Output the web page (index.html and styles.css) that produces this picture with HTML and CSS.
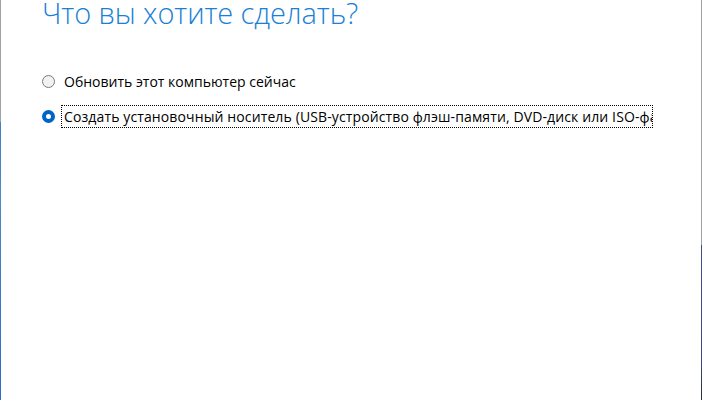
FILE: index.html
```html
<!DOCTYPE html>
<html lang="ru">
<head>
    <meta charset="UTF-8">
    <title>Программа установки Windows 10</title>
    <link rel="stylesheet" href="styles.css">
</head>
<body>
    <div class="frame">
        <div class="edge edge-left"></div>
        <main class="page">
            <h1 class="title">Что вы хотите сделать?</h1>
            <div class="options">
                <label class="option">
                    <span class="radio"></span>
                    <span class="option-text">Обновить этот компьютер сейчас</span>
                </label>
                <label class="option">
                    <span class="radio checked"></span>
                    <span class="option-text focused">Создать установочный носитель (USB-устройство флэш-памяти, DVD-диск или ISO-файл)</span>
                </label>
            </div>
        </main>
        <div class="edge edge-right"></div>
    </div>
</body>
</html>
```

FILE: styles.css
```css
html, body {
    margin: 0;
    height: 100%;
    background-color: #FFFFFF;
}
.frame {
    display: flex;
    height: 400px;
    width: 702px;
}
.edge {
    width: 1px;
    flex: none;
}
.edge-left {
    background: linear-gradient(to bottom, #9da2a8 0, #9da2a8 122px, #3f80c8 122px, #4a8cc4 200px, #3a78c6 300px, #2f6cc4 400px);
}
.edge-right {
    background: linear-gradient(to bottom, #a0a2a5 0, #a0a2a5 245px, #3b4f92 245px, #3b4a86 360px, #2a2c44 400px);
}
.page {
    flex: 1;
    min-width: 0;
    padding: 0 0 0 41px;
    overflow: hidden;
    font-family: "Open Sans", "Noto Sans", sans-serif;
}
.title {
    margin: 0;
    font-size: 29px;
    font-weight: 300;
    color: #1a7fd6;
    letter-spacing: -0.1px;
    line-height: 26px;
}
.options {
    display: flex;
    flex-direction: column;
    gap: 12px;
    margin-top: 44px;
}
.option {
    display: flex;
    align-items: center;
    gap: 6px;
    font-size: 14px;
    color: #000000;
    white-space: nowrap;
}
.radio {
    flex: none;
    box-sizing: border-box;
    width: 13px;
    height: 13px;
    border: 1px solid #7a7a7a;
    border-radius: 50%;
    background-color: #f2f2f2;
}
.radio.checked {
    border: 4px solid #0063c6;
    background-color: #FFFFFF;
}
.option-text {
    padding: 1px 2px;
    line-height: 19px;
    border: 1px dotted transparent;
}
.option-text.focused {
    border-color: #000000;
    width: 586px;
    overflow: hidden;
    letter-spacing: 0.12px;
}
```
